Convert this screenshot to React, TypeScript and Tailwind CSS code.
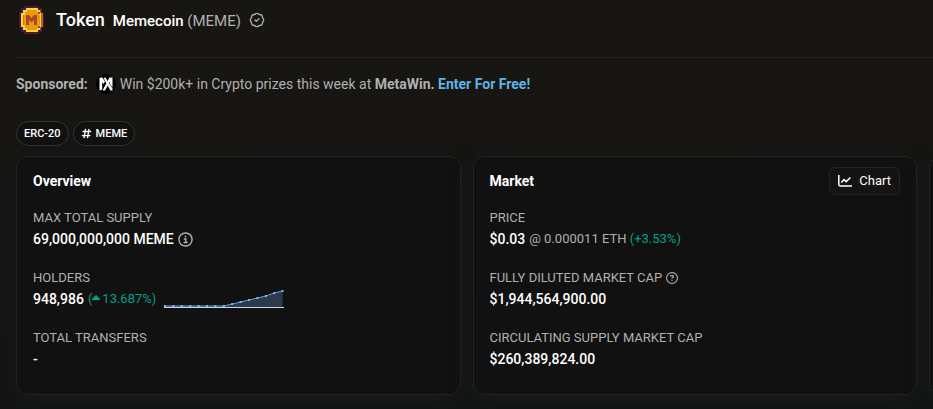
import React from 'react';
import { BadgeCheck } from 'lucide-react';
import { FaHashtag, FaRegCircleQuestion } from 'react-icons/fa6';

const TokenLogo = () => (
  <svg viewBox="0 0 28 28" className="h-7 w-7" aria-hidden="true">
    <path d="M6 0h15v2h3v4h2v16h-2v4h-3v2H6v-2H3v-4H1V6h2V2h3z" fill="#471a35" />
    <path d="M8 2h12v2h3v3h2v14h-2v3h-3v2H8v-2H5v-3H3V7h2V4h3z" fill="#b5651f" />
    <path d="M8 2h12v2h2v3h1v14h-1v3h-2v2H8v-2H5v-3H3V7h2V4h3z" fill="#f8d247" />
    <path d="M9 4h10v2h2v3h1v10h-1v3h-2v2H9v-2H7v-3H5V9h2V6h2z" fill="#ee9a08" />
    <path d="M20 6h2v2h-2zM20 20h2v2h-2z" fill="#a34b20" />
    <path d="M5 9h1v10H5z" fill="#c4761a" />
    <path d="M8 9h3l2.500 3L16 9h3v10h-3v-5l-2.500 2.500L11 14v5H8z" fill="#a34a2b" />
  </svg>
);

const SponsorLogo = () => (
  <svg viewBox="0 0 20 20" className="h-5 w-5" aria-hidden="true">
    <circle cx="10" cy="10" r="10" fill="#000" />
    <path d="M3.500 4 6 3.200 9 7.500 7.500 10 6.200 8v7.500l-2.700 1z" fill="#fff" />
    <path d="M7.500 4 9.500 3.500 16.500 14.500v2h-2.200z" fill="#eee" />
    <path d="M13.500 3.500h3v10L14 10V7.500L9 16.500H6.500z" fill="#fff" />
  </svg>
);

const InfoIcon = () => (
  <svg viewBox="0 0 16 16" className="h-[15px] w-[15px] text-[#b0b0b0]" aria-hidden="true">
    <circle cx="8" cy="8" r="7" fill="none" stroke="currentColor" strokeWidth="1.5" />
    <path d="M6.2 7.4H8.3V11M5.9 11.2h4.3" fill="none" stroke="currentColor" strokeWidth="1.5" />
    <circle cx="8" cy="4.9" r="1" fill="currentColor" />
  </svg>
);

const ChartIcon = () => (
  <svg viewBox="0 0 14 12" className="h-3 w-[14px]" fill="none" stroke="currentColor" strokeWidth="1.5" aria-hidden="true">
    <path d="M.8 0v9.6q0 1.4 1.4 1.4H14" />
    <path d="M3.3 7.5 6 4.600l2.200 2 4.200-4.100" />
  </svg>
);

const holders = [0, 0, 0, 0, 0, 0, 0, 0, 2, 4, 6, 8, 10, 13, 15];

const Sparkline = () => {
  const points = holders.map((value, i) => [1 + i * 8.4, 16 - value]);
  const line = points.map((p) => p.join(',')).join(' ');

  return (
    <svg viewBox="0 0 120 18" className="h-[18px] w-[120px]" aria-hidden="true">
      <polygon points={`1,17 ${line} 118.6,17`} fill="#2b3b4b" />
      <polyline points={line} fill="none" stroke="#6ba0d6" strokeWidth="1" />
      {points.map(([x, y]) => (
        <rect key={x} x={x - 1} y={y - 1} width="2" height="2" fill="#7cb5ec" />
      ))}
      <rect y="17" width="120" height="1" fill="#ccd6eb" />
    </svg>
  );
};

const Card = ({ title, action, children }: { title?: string; action?: React.ReactNode; children?: React.ReactNode }) => (
  <section className="rounded-xl border border-[#222] bg-[#111] px-4 pt-3 pb-6 shadow-[0_8px_19px_#171b1b]">
    {title && (
      <div className="flex h-6 items-center justify-between">
        <h2 className="text-sm font-bold text-white">{title}</h2>
        {action}
      </div>
    )}
    <dl className="mt-[15px] flex flex-col gap-[18px]">{children}</dl>
  </section>
);

const Stat = ({ label, icon, children }: { label: string; icon?: React.ReactNode; children: React.ReactNode }) => (
  <div>
    <dt className="flex h-5 items-center gap-1 text-[13px] text-[#b0b0b0] uppercase">
      {label}
      {icon}
    </dt>
    <dd className="flex h-[22px] items-center gap-1 text-sm font-medium text-white">{children}</dd>
  </div>
);

const App = () => {
  return (
    <main className="overflow-hidden bg-linear-to-b from-[#181612] to-[#131414] pb-[14px] font-[Roboto,sans-serif] text-sm text-[#b0b0b0]">
      {/* Token name */}
      <header className="ml-4 flex h-[58px] items-start border-b border-[#252422] pt-[6px]">
        <div className="flex h-7 items-center pl-[2px]">
          <TokenLogo />
          <h1 className="ml-[10px] flex items-baseline gap-2 text-lg font-medium text-white">
            Token
            <span className="text-[15px]">
              Memecoin <span className="font-normal text-[#b0b0b0]">(MEME)</span>
            </span>
          </h1>
          <BadgeCheck className="ml-2 h-4 w-4" strokeWidth={2} />
        </div>
      </header>

      {/* Sponsored line */}
      <p className="mt-4 flex h-5 items-center gap-1 px-4">
        <span className="mr-1 font-bold">Sponsored:</span>
        <SponsorLogo />
        <span>
          Win $200k+ in Crypto prizes this week at <b>MetaWin.</b>{' '}
          <a href="#" className="font-bold text-[#60b3e6]">Enter For Free!</a>
        </span>
      </p>

      {/* Tags */}
      <div className="mt-[27px] flex gap-1 px-4 text-[11px] font-medium text-white">
        <span className="flex h-[25px] items-center rounded-full border border-[#333] bg-[#111] px-[7px]">ERC-20</span>
        <a href="#" className="flex h-[25px] items-center gap-1 rounded-full border border-[#333] bg-[#111] px-[7px]">
          <FaHashtag className="h-[11px] w-[11px]" />
          MEME
        </a>
      </div>

      {/* Cards, the third one runs off to the right */}
      <div className="mt-[10px] grid auto-cols-[calc(50%-14px)] grid-flow-col gap-3 pl-4">
        <Card title="Overview">
          <Stat label="Max Total Supply">
            69,000,000,000 MEME <InfoIcon />
          </Stat>
          <Stat label="Holders">
            948,986
            <span className="flex items-center text-[13px] font-normal text-[#00a186]">
              (
              <svg viewBox="0 0 8 5" className="mr-[2px] mb-1 h-[5px] w-2" aria-hidden="true">
                <path d="M4 0 8 4v1H0V4z" fill="currentColor" />
              </svg>
              13.687%)
            </span>
            <span className="ml-1">
              <Sparkline />
            </span>
          </Stat>
          <Stat label="Total Transfers">-</Stat>
        </Card>
        <Card
          title="Market"
          action={
            <button type="button" className="flex h-7 items-center gap-[7px] rounded-md border border-[#222] bg-[#141414] px-2 text-[13px] text-white">
              <ChartIcon />
              Chart
            </button>
          }
        >
          <Stat label="Price">
            $0.03
            <span className="text-[13px] font-normal text-[#b0b0b0]">
              @ 0.000011 ETH <span className="text-[#00a186]">(+3.53%)</span>
            </span>
          </Stat>
          <Stat label="Fully Diluted Market Cap" icon={<FaRegCircleQuestion className="h-3 w-3" />}>
            $1,944,564,900.00
          </Stat>
          <Stat label="Circulating Supply Market Cap">$260,389,824.00</Stat>
        </Card>
        <Card />
      </div>
    </main>
  );
};

export default App;
